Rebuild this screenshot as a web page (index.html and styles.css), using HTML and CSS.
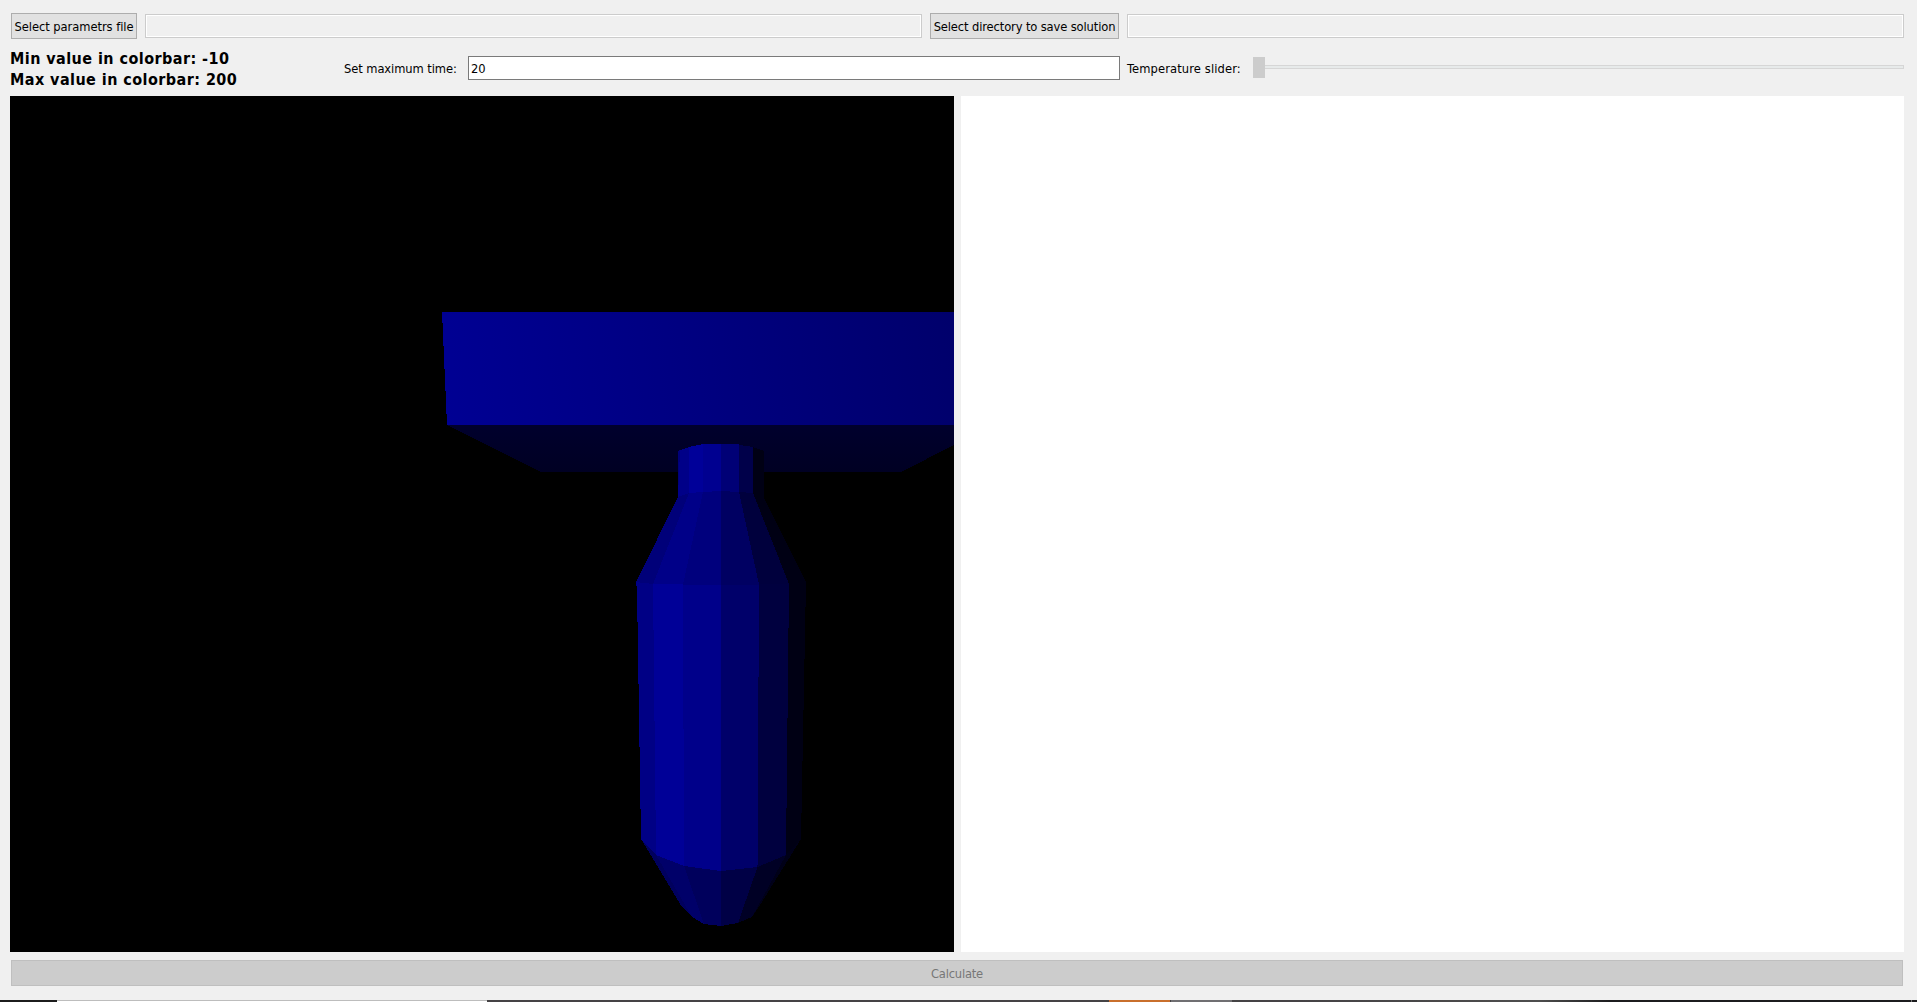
FILE: index.html
```html
<!DOCTYPE html>
<html lang="en">
<head>
<meta charset="utf-8">
<title>Temperature solver</title>
<link rel="stylesheet" href="styles.css">
</head>
<body>
<main class="window">
  <div class="files">
    <button class="button pick-file"><span>Select parametrs file</span></button>
    <div class="path"></div>
    <button class="button pick-dir"><span>Select directory to save solution</span></button>
    <div class="path"></div>
  </div>
  <div class="settings">
    <div class="range"><span class="min">Min value in colorbar: -10</span><br><span class="max">Max value in colorbar: 200</span></div>
    <label class="time-label" for="time"><span>Set maximum time:</span></label>
    <input class="time" id="time" value="20">
    <div class="slider-label"><span>Temperature slider:</span></div>
    <div class="slider"><div class="handle"></div><div class="groove"></div></div>
  </div>
  <div class="views">
    <svg class="scene" viewBox="10 96 944 856" shape-rendering="crispEdges">
      <defs>
        <linearGradient id="front" gradientUnits="userSpaceOnUse" x1="442" y1="400" x2="954" y2="340"><stop offset="0" stop-color="#000093"/><stop offset=".5" stop-color="#000080"/><stop offset="1" stop-color="#00006c"/></linearGradient>
        <linearGradient id="under" x1="0" y1="0" x2="0" y2="1"><stop offset="0" stop-color="#00002d"/><stop offset="1" stop-color="#000023"/></linearGradient>
      </defs>
      <rect x="10" y="96" width="944" height="856" fill="#000"/>
      <path fill="url(#under)" d="M447 425H954V445L901 472H541Z"/>
      <path fill="url(#front)" d="M442 312H954V425H447Z"/>
      <!-- neck -->
      <path fill="#000078" d="M678 451L680 450V497H678Z"/>
      <path fill="#000088" d="M680 450L689.5 447V494L678 497Z"/>
      <path fill="#000099" d="M689 447L703 444V492L689 493Z"/>
      <path fill="#000090" d="M703 444H721V492H703Z"/>
      <path fill="#000076" d="M721 444H738L739 445V492H721Z"/>
      <path fill="#00004a" d="M739 445L753 447V493L739 492Z"/>
      <path fill="#000014" d="M753 447L764 451V498L753 493Z"/>
      <!-- shoulder -->
      <path fill="#000079" d="M678 497L689 493L653 584L636 582Z"/>
      <path fill="#000088" d="M689 493L703 492L683 584.5L653 584Z"/>
      <path fill="#00007d" d="M703 492L721 491V585L683 584.5Z"/>
      <path fill="#000062" d="M721 491L739 492L759 584.5L721 585Z"/>
      <path fill="#00003d" d="M739 492L753 493L789 584L759 584.5Z"/>
      <path fill="#000014" d="M753 493L764 498L806 582L789 584Z"/>
      <!-- body -->
      <path fill="#000085" d="M636 582L653 584L656 855L641 839L637 590Z"/>
      <path fill="#000097" d="M653 584L683 584.5L684 866L656 855Z"/>
      <path fill="#00008a" d="M683 584.5L721 585V871L684 866Z"/>
      <path fill="#00006a" d="M721 585L759 584.5L757.5 867L721 871Z"/>
      <path fill="#00003f" d="M759 584.5L789 584L786 855L757.5 867Z"/>
      <path fill="#000014" d="M789 584L806 582L801 839L786 855Z"/>
      <!-- tip -->
      <path fill="#00005e" d="M641 839L656 855L692 917L682 907Z"/>
      <path fill="#000069" d="M656 855L684 866L704 924L692 917Z"/>
      <path fill="#00005c" d="M684 866L721 871V926L704 924Z"/>
      <path fill="#000046" d="M721 871L757.5 867L738 923L721 926Z"/>
      <path fill="#000025" d="M757.5 867L786 855L752 917L738 923Z"/>
      <path fill="#000018" d="M786 855L801 839L760 905L752 917Z"/>
    </svg>
    <div class="plot"></div>
  </div>
  <button class="button calculate" disabled>Calculate</button>
</main>
<div class="taskbar"></div>
</body>
</html>
```
FILE: styles.css
```css
* { box-sizing: border-box; }
body {
  margin: 0;
  height: 1002px;
  overflow: hidden;
  background: #f0f0f0;
  color: #000;
  font: 12.8px/16px "DejaVu Sans Condensed", "DejaVu Sans", sans-serif;
  font-stretch: condensed;
  display: flex;
  flex-direction: column;
}
.window {
  height: 1000px;
  padding: 13px 13px 14px 10px;
  display: flex;
  flex-direction: column;
}
.button {
  height: 26px;
  padding: 2px 0 0;
  border: 1px solid #adadad;
  border-radius: 0;
  background: #e1e1e1;
  color: inherit;
  font: inherit;
  font-stretch: inherit;
  white-space: nowrap;
}
.files {
  display: flex;
  align-items: center;
  gap: 8px;
  height: 26px;
  padding-left: 1px;
}
.pick-file { width: 126px; letter-spacing: -0.05px; }
.pick-dir { width: 189px; letter-spacing: -0.12px; }
.path {
  flex: 1;
  height: 24px;
  border: 1px solid #cccccc;
  box-shadow: inset 0 0 0 1px #fff;
}
.settings {
  display: flex;
  height: 57px;
  padding-top: 9px;
}
.range {
  width: 334px;
  font-size: 16px;
  font-weight: bold;
  line-height: 21px;
  letter-spacing: 0.44px;
  white-space: nowrap;
}
.time-label { width: 124px; padding-top: 13px; letter-spacing: -0.08px; white-space: nowrap; }
.time {
  width: 652px;
  height: 24px;
  margin-top: 8px;
  padding: 0 2px;
  border: 1px solid #7a7a7a;
  background: #fff;
  font: inherit;
  font-stretch: inherit;
}
.slider-label { width: 133px; padding: 13px 0 0 7px; letter-spacing: 0.12px; white-space: nowrap; }
.slider { flex: 1; display: flex; padding-top: 9px; }
.handle { width: 12px; height: 21px; background: #cccccc; }
.groove {
  flex: 1;
  height: 4px;
  margin-top: 8px;
  border: 1px solid #d6d6d6;
  border-left: 0;
  background: #e7eaea;
}
.views { display: flex; gap: 7px; height: 856px; }
.scene { width: 944px; height: 856px; display: block; }
.plot { flex: 1; background: #fff; }
.calculate {
  height: 26px;
  margin: 8px 1px 0;
  border-color: #bfbfbf;
  background: #cccccc;
  color: #777;
  letter-spacing: -0.2px;
}
.taskbar {
  height: 2px;
  background:
    linear-gradient(#bdbdbd 50%, #fff 50%) 57px 0 / 430px 2px no-repeat,
    linear-gradient(90deg, #1c1c1c 57px, #454345 57px 1109px, #c96f2c 1109px 1170px, #454345 1170px 1171px, #706f72 1171px 1232px, #454345 1232px 1300px, #4d4d4d 1540px, #1c1c1e 1610px 1911px, #777 1911px 1912px, #1c1c1e 1912px);
}
```
